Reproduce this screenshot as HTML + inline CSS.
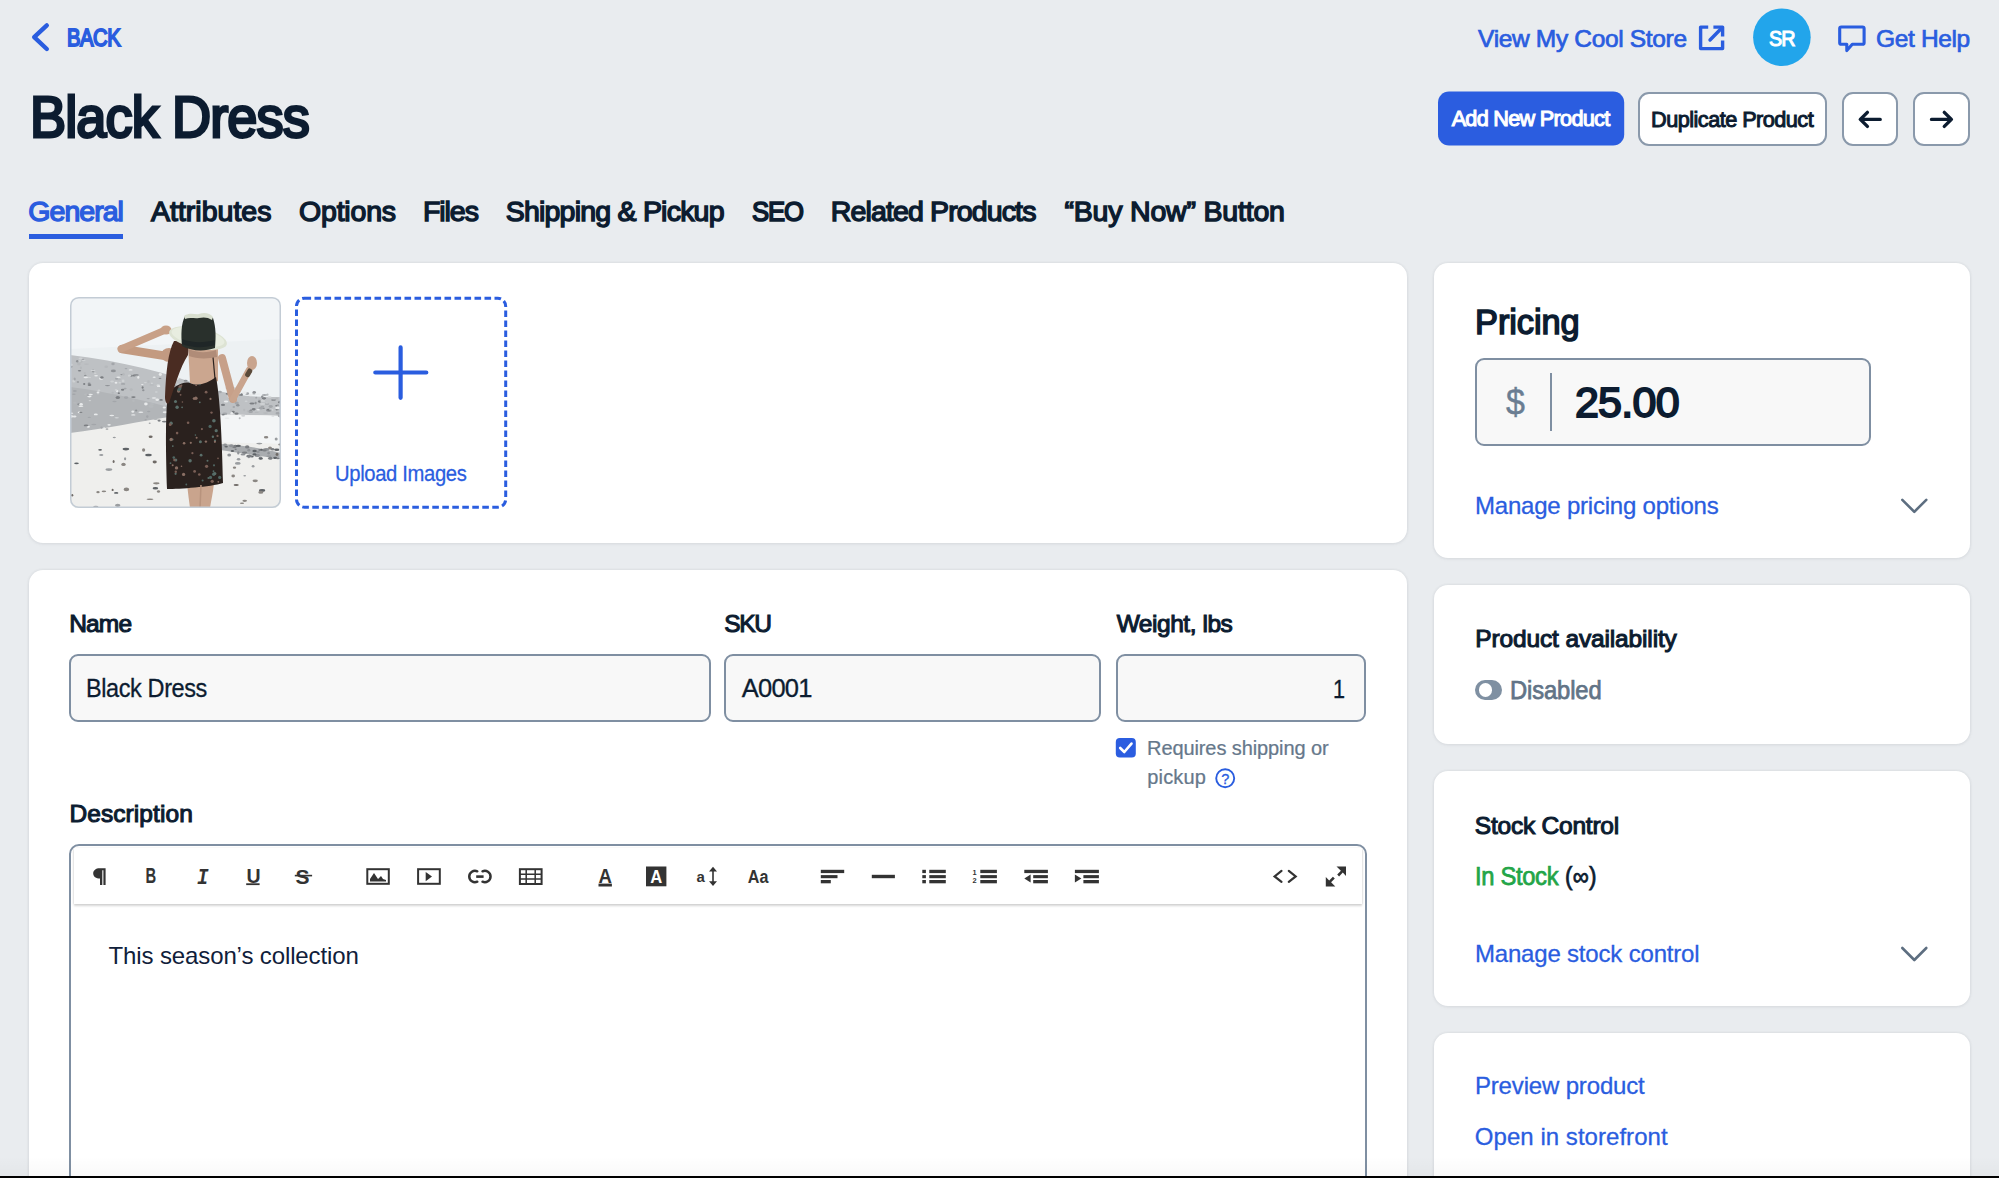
<!DOCTYPE html>
<html><head><meta charset="utf-8">
<style>
html,body{margin:0;padding:0;}
body{width:1999px;height:1178px;overflow:hidden;background:#e9ecef;position:relative;font-family:"Liberation Sans",sans-serif;}
.abs{position:absolute;}
.t{position:absolute;}
.card{position:absolute;background:#fff;border-radius:14px;box-shadow:0 0 3px rgba(30,40,60,0.09),0 1px 4px rgba(30,40,60,0.05);}
.inp{position:absolute;box-sizing:border-box;background:#f8f8f8;border:2px solid #7f8fa2;border-radius:9px;}
.btnw{position:absolute;box-sizing:border-box;background:#fff;border:2px solid #8a99ab;border-radius:11px;}
</style></head><body>
<!-- top bar icons -->
<svg class="abs" style="left:0;top:0" width="1999" height="160" viewBox="0 0 1999 160">
 <path d="M46.8,25.4 L34.2,37.2 L46.8,49" fill="none" stroke="#2a5ddf" stroke-width="4.4" stroke-linecap="round" stroke-linejoin="round"/>
 <path d="M1708.2,27.1 H1700.6 V48.6 H1722.6 V40.5" fill="none" stroke="#2a5ddf" stroke-width="3.4" stroke-linejoin="round"/>
 <path d="M1710,40 L1721.5,28.3" fill="none" stroke="#2a5ddf" stroke-width="3.4" stroke-linecap="round"/>
 <path d="M1713.4,27.1 H1722.6 V36.4" fill="none" stroke="#2a5ddf" stroke-width="3.4" stroke-linejoin="round"/>
 <circle cx="1781.9" cy="37.2" r="28.8" fill="#22a5eb"/>
 <path d="M1852.3,44.3 H1862.5 Q1864.1,44.3 1864.1,42.7 V28.6 Q1864.1,27 1862.5,27 H1841.3 Q1839.7,27 1839.7,28.6 V42.7 Q1839.7,44.3 1841.3,44.3 H1846.8 V50.6 Z" fill="none" stroke="#2a5ddf" stroke-width="3.1" stroke-linejoin="round"/>
 <rect x="1438" y="91.5" width="186.2" height="54" rx="11" fill="#2b5de0"/>
</svg>
<div class="btnw" style="left:1638.2px;top:92px;width:189.2px;height:53.6px;"></div>
<div class="btnw" style="left:1841.5px;top:92px;width:56.9px;height:53.6px;"></div>
<div class="btnw" style="left:1912.8px;top:92px;width:57.2px;height:53.6px;"></div>
<svg class="abs" style="left:1800px;top:100px" width="199" height="40" viewBox="1800 100 199 40">
 <path d="M1880.2,119.4 H1860.4 M1867.4,112.4 L1860.3,119.4 L1867.4,126.4" fill="none" stroke="#0c1c30" stroke-width="3.4" stroke-linecap="round" stroke-linejoin="round"/>
 <path d="M1931.5,119.4 H1951.3 M1944.3,112.4 L1951.4,119.4 L1944.3,126.4" fill="none" stroke="#0c1c30" stroke-width="3.4" stroke-linecap="round" stroke-linejoin="round"/>
</svg>
<div class="abs" style="left:28.6px;top:234.2px;width:94.6px;height:4.8px;background:#2a5ddf;"></div>

<!-- cards -->
<div class="card" style="left:28.7px;top:262.6px;width:1378.8px;height:280.6px;"></div>
<div class="card" style="left:28.7px;top:569.8px;width:1378.8px;height:700px;"></div>
<div class="card" style="left:1434.4px;top:262.6px;width:535.9px;height:295.4px;"></div>
<div class="card" style="left:1434.4px;top:585px;width:535.9px;height:159.2px;"></div>
<div class="card" style="left:1434.4px;top:770.9px;width:535.9px;height:234.7px;"></div>
<div class="card" style="left:1434.4px;top:1032.5px;width:535.9px;height:400px;"></div>

<svg class="abs" style="left:70px;top:297px" width="211" height="211" viewBox="0 0 211 211">
<defs>
 <clipPath id="pc"><rect x="0" y="0" width="211" height="211" rx="8"/></clipPath>
 <clipPath id="dc"><path d="M98,96 C104,90 112,84 120,86 C128,90 138,86 146,80 C150,100 152,140 153,186 C140,190 110,192 97,192 C96,160 95,120 98,96 Z"/></clipPath>
</defs>
<g clip-path="url(#pc)">
 <rect width="211" height="211" fill="#f2f5f7"/>
 <path d="M0,52 L211,42 L211,100 L0,100 Z" fill="#edf1f3"/>
 <path d="M0,58 C50,64 100,76 140,92 C170,100 190,100 211,100 L211,119 C180,118 140,117 106,119 C70,124 35,132 0,136 Z" fill="#bec1c4"/>
 <path d="M0,90 C40,95 80,105 106,112 L106,125 C70,128 35,134 0,137 Z" fill="#b2b5b8"/>
 <path d="M0,136 C35,132 70,124 106,119 C140,117 180,118 211,119 L211,211 L0,211 Z" fill="#efefed"/>
 <path d="M150,118 L211,119 L211,147 C190,146 170,146 150,145 Z" fill="#f3f5f6"/>
 <path d="M150,147 C175,148 195,152 211,156 L211,162 C195,160 170,156 150,153 Z" fill="#a9acaf"/>
 <ellipse cx="68.3" cy="80.4" rx="1.1" ry="1.3" fill="#e8eaeb"/><ellipse cx="19.9" cy="103.6" rx="1.3" ry="0.7" fill="#cfd2d4"/><ellipse cx="88.2" cy="88.3" rx="1.7" ry="1.3" fill="#cfd2d4"/><ellipse cx="26.1" cy="78.8" rx="1.9" ry="0.7" fill="#e8eaeb"/><ellipse cx="123.5" cy="84.7" rx="1.1" ry="1.4" fill="#a3a6aa"/><ellipse cx="61.1" cy="78.8" rx="1.9" ry="1.1" fill="#8f9296"/><ellipse cx="143.9" cy="90.5" rx="2.0" ry="0.9" fill="#cfd2d4"/><ellipse cx="115.6" cy="83.8" rx="2.0" ry="1.0" fill="#8f9296"/><ellipse cx="112.2" cy="116.2" rx="1.9" ry="1.0" fill="#b6b9bc"/><ellipse cx="63.3" cy="117.9" rx="2.2" ry="0.7" fill="#e8eaeb"/><ellipse cx="63.4" cy="100.1" rx="2.2" ry="0.9" fill="#7b7e82"/><ellipse cx="206.8" cy="101.5" rx="1.3" ry="0.9" fill="#b6b9bc"/><ellipse cx="196.9" cy="106.8" rx="1.1" ry="1.1" fill="#e8eaeb"/><ellipse cx="166.5" cy="116.7" rx="2.1" ry="1.1" fill="#7b7e82"/><ellipse cx="122.4" cy="102.1" rx="2.5" ry="1.0" fill="#8f9296"/><ellipse cx="140.1" cy="88.2" rx="1.5" ry="1.1" fill="#e8eaeb"/><ellipse cx="143.7" cy="103.3" rx="1.6" ry="1.2" fill="#e8eaeb"/><ellipse cx="4.8" cy="93.9" rx="2.0" ry="1.0" fill="#a3a6aa"/><ellipse cx="46.0" cy="85.7" rx="1.4" ry="1.0" fill="#e8eaeb"/><ellipse cx="183.9" cy="96.7" rx="1.6" ry="0.9" fill="#b6b9bc"/><ellipse cx="28.9" cy="93.5" rx="1.4" ry="1.0" fill="#cfd2d4"/><ellipse cx="75.7" cy="122.8" rx="1.2" ry="0.8" fill="#a3a6aa"/><ellipse cx="48.9" cy="82.6" rx="2.3" ry="0.8" fill="#b6b9bc"/><ellipse cx="59.5" cy="78.7" rx="1.6" ry="1.1" fill="#cfd2d4"/><ellipse cx="201.1" cy="113.0" rx="2.5" ry="1.2" fill="#cfd2d4"/><ellipse cx="156.1" cy="104.6" rx="2.3" ry="1.0" fill="#e8eaeb"/><ellipse cx="84.2" cy="80.3" rx="1.6" ry="0.8" fill="#e8eaeb"/><ellipse cx="207.8" cy="108.1" rx="1.5" ry="0.6" fill="#8f9296"/><ellipse cx="0.0" cy="69.7" rx="2.5" ry="1.2" fill="#8f9296"/><ellipse cx="14.8" cy="76.1" rx="1.2" ry="0.8" fill="#b6b9bc"/><ellipse cx="73.3" cy="93.3" rx="1.2" ry="1.0" fill="#8f9296"/><ellipse cx="206.3" cy="108.8" rx="1.1" ry="0.7" fill="#7b7e82"/><ellipse cx="72.3" cy="87.5" rx="1.3" ry="0.6" fill="#e8eaeb"/><ellipse cx="200.7" cy="109.5" rx="2.1" ry="1.4" fill="#a3a6aa"/><ellipse cx="160.0" cy="99.7" rx="2.4" ry="1.2" fill="#e8eaeb"/><ellipse cx="55.1" cy="91.6" rx="1.6" ry="0.8" fill="#a3a6aa"/><ellipse cx="114.3" cy="103.7" rx="1.4" ry="1.3" fill="#e8eaeb"/><ellipse cx="207.8" cy="116.3" rx="2.3" ry="1.3" fill="#a3a6aa"/><ellipse cx="47.8" cy="100.6" rx="2.2" ry="1.5" fill="#7b7e82"/><ellipse cx="166.7" cy="105.9" rx="2.1" ry="1.5" fill="#a3a6aa"/><ellipse cx="94.4" cy="124.6" rx="2.5" ry="0.9" fill="#7b7e82"/><ellipse cx="46.5" cy="81.8" rx="1.5" ry="1.0" fill="#a3a6aa"/><ellipse cx="207.9" cy="111.5" rx="1.8" ry="1.2" fill="#8f9296"/><ellipse cx="168.7" cy="94.2" rx="1.2" ry="0.9" fill="#e8eaeb"/><ellipse cx="150.1" cy="95.0" rx="1.7" ry="1.2" fill="#a3a6aa"/><ellipse cx="18.3" cy="129.7" rx="1.6" ry="1.0" fill="#e8eaeb"/><ellipse cx="199.8" cy="113.8" rx="2.6" ry="0.6" fill="#a3a6aa"/><ellipse cx="124.7" cy="102.7" rx="1.2" ry="1.3" fill="#e8eaeb"/><ellipse cx="206.8" cy="112.4" rx="1.2" ry="1.1" fill="#7b7e82"/><ellipse cx="4.5" cy="119.5" rx="2.0" ry="1.1" fill="#e8eaeb"/><ellipse cx="197.0" cy="107.1" rx="2.3" ry="0.8" fill="#a3a6aa"/><ellipse cx="53.1" cy="86.9" rx="2.2" ry="0.9" fill="#a3a6aa"/><ellipse cx="114.9" cy="118.8" rx="2.5" ry="0.9" fill="#8f9296"/><ellipse cx="96.7" cy="106.7" rx="1.7" ry="1.4" fill="#cfd2d4"/><ellipse cx="105.8" cy="104.5" rx="1.8" ry="1.4" fill="#cfd2d4"/><ellipse cx="163.8" cy="110.1" rx="1.3" ry="1.0" fill="#a3a6aa"/><ellipse cx="153.0" cy="107.9" rx="2.1" ry="1.1" fill="#7b7e82"/><ellipse cx="101.8" cy="116.3" rx="1.1" ry="0.8" fill="#cfd2d4"/><ellipse cx="8.9" cy="67.1" rx="1.9" ry="1.3" fill="#b6b9bc"/><ellipse cx="192.5" cy="107.0" rx="2.6" ry="1.1" fill="#cfd2d4"/><ellipse cx="42.1" cy="84.5" rx="1.9" ry="1.0" fill="#cfd2d4"/><ellipse cx="198.7" cy="113.2" rx="2.5" ry="1.4" fill="#7b7e82"/><ellipse cx="42.7" cy="95.7" rx="1.2" ry="1.0" fill="#b6b9bc"/><ellipse cx="15.3" cy="78.6" rx="1.3" ry="0.9" fill="#8f9296"/><ellipse cx="25.8" cy="117.4" rx="2.0" ry="0.9" fill="#e8eaeb"/><ellipse cx="53.4" cy="77.2" rx="1.4" ry="1.5" fill="#b6b9bc"/><ellipse cx="84.0" cy="101.0" rx="2.3" ry="0.7" fill="#e8eaeb"/><ellipse cx="91.1" cy="102.9" rx="1.7" ry="0.9" fill="#7b7e82"/><ellipse cx="19.5" cy="88.1" rx="1.9" ry="1.0" fill="#7b7e82"/><ellipse cx="3.8" cy="83.9" rx="1.5" ry="1.5" fill="#cfd2d4"/><ellipse cx="23.8" cy="127.5" rx="2.6" ry="0.7" fill="#a3a6aa"/><ellipse cx="56.0" cy="71.6" rx="1.4" ry="0.7" fill="#a3a6aa"/><ellipse cx="89.1" cy="123.6" rx="1.6" ry="1.1" fill="#7b7e82"/><ellipse cx="108.6" cy="102.9" rx="1.1" ry="0.7" fill="#7b7e82"/><ellipse cx="145.2" cy="102.7" rx="1.4" ry="0.6" fill="#8f9296"/><ellipse cx="18.7" cy="80.4" rx="2.4" ry="0.7" fill="#cfd2d4"/><ellipse cx="182.0" cy="106.5" rx="2.6" ry="1.0" fill="#7b7e82"/><ellipse cx="193.2" cy="111.3" rx="1.8" ry="0.8" fill="#8f9296"/><ellipse cx="23.1" cy="74.0" rx="1.3" ry="1.4" fill="#8f9296"/><ellipse cx="132.6" cy="105.9" rx="1.5" ry="1.1" fill="#a3a6aa"/><ellipse cx="37.5" cy="88.6" rx="2.6" ry="0.6" fill="#8f9296"/><ellipse cx="3.9" cy="97.2" rx="1.8" ry="0.8" fill="#a3a6aa"/><ellipse cx="94.3" cy="110.4" rx="1.7" ry="1.0" fill="#e8eaeb"/><ellipse cx="176.1" cy="104.3" rx="1.5" ry="0.8" fill="#cfd2d4"/><ellipse cx="48.4" cy="80.3" rx="2.2" ry="0.7" fill="#e8eaeb"/><ellipse cx="208.8" cy="118.8" rx="1.0" ry="1.2" fill="#a3a6aa"/><ellipse cx="185.6" cy="106.1" rx="1.1" ry="1.4" fill="#8f9296"/><ellipse cx="183.7" cy="112.3" rx="2.0" ry="1.2" fill="#7b7e82"/><ellipse cx="9.5" cy="73.7" rx="1.7" ry="0.8" fill="#7b7e82"/><ellipse cx="202.9" cy="119.0" rx="1.5" ry="0.6" fill="#cfd2d4"/><ellipse cx="186.2" cy="100.7" rx="1.0" ry="0.9" fill="#a3a6aa"/><ellipse cx="100.1" cy="102.8" rx="1.4" ry="1.3" fill="#a3a6aa"/><ellipse cx="19.2" cy="120.4" rx="1.6" ry="0.6" fill="#a3a6aa"/><ellipse cx="4.7" cy="82.0" rx="1.1" ry="1.5" fill="#a3a6aa"/><ellipse cx="180.0" cy="98.1" rx="2.3" ry="1.1" fill="#e8eaeb"/><ellipse cx="161.3" cy="113.6" rx="1.2" ry="1.3" fill="#b6b9bc"/><ellipse cx="135.7" cy="86.8" rx="2.4" ry="1.2" fill="#e8eaeb"/><ellipse cx="154.8" cy="116.8" rx="2.5" ry="1.3" fill="#a3a6aa"/><ellipse cx="119.9" cy="117.7" rx="2.3" ry="1.1" fill="#8f9296"/><ellipse cx="188.4" cy="112.7" rx="2.0" ry="0.7" fill="#e8eaeb"/><ellipse cx="8.8" cy="107.3" rx="1.6" ry="1.0" fill="#8f9296"/><ellipse cx="10.7" cy="61.5" rx="2.1" ry="1.0" fill="#cfd2d4"/><ellipse cx="0.7" cy="119.4" rx="2.5" ry="1.4" fill="#e8eaeb"/><ellipse cx="19.4" cy="99.6" rx="2.2" ry="0.8" fill="#e8eaeb"/><ellipse cx="15.7" cy="80.4" rx="2.2" ry="0.8" fill="#e8eaeb"/><ellipse cx="137.1" cy="103.4" rx="1.1" ry="1.4" fill="#b6b9bc"/><ellipse cx="60.6" cy="72.9" rx="2.0" ry="0.7" fill="#e8eaeb"/><ellipse cx="31.1" cy="81.6" rx="2.1" ry="1.2" fill="#e8eaeb"/><ellipse cx="28.2" cy="97.0" rx="1.4" ry="1.2" fill="#b6b9bc"/><ellipse cx="146.1" cy="112.0" rx="2.1" ry="0.9" fill="#7b7e82"/><ellipse cx="98.3" cy="115.9" rx="1.3" ry="1.5" fill="#cfd2d4"/><ellipse cx="197.5" cy="97.7" rx="1.1" ry="1.1" fill="#b6b9bc"/><ellipse cx="209.9" cy="119.0" rx="1.3" ry="1.5" fill="#b6b9bc"/><ellipse cx="44.5" cy="104.5" rx="2.2" ry="0.8" fill="#a3a6aa"/><ellipse cx="75.9" cy="107.0" rx="1.8" ry="1.4" fill="#e8eaeb"/><ellipse cx="148.4" cy="95.9" rx="1.6" ry="0.7" fill="#b6b9bc"/><ellipse cx="200.4" cy="112.8" rx="1.5" ry="0.7" fill="#b6b9bc"/><ellipse cx="72.6" cy="90.5" rx="1.0" ry="1.3" fill="#7b7e82"/><ellipse cx="177.1" cy="96.6" rx="2.1" ry="1.4" fill="#a3a6aa"/><ellipse cx="61.2" cy="92.6" rx="1.6" ry="1.4" fill="#b6b9bc"/><ellipse cx="16.1" cy="128.4" rx="2.4" ry="0.9" fill="#7b7e82"/><ellipse cx="10.9" cy="109.2" rx="2.5" ry="0.8" fill="#e8eaeb"/><ellipse cx="56.1" cy="100.6" rx="2.2" ry="1.3" fill="#a3a6aa"/><ellipse cx="90.3" cy="77.5" rx="1.6" ry="1.4" fill="#e8eaeb"/><ellipse cx="116.9" cy="90.4" rx="1.1" ry="1.3" fill="#8f9296"/><ellipse cx="95.1" cy="115.2" rx="2.4" ry="1.0" fill="#e8eaeb"/><ellipse cx="192.4" cy="109.6" rx="1.8" ry="0.9" fill="#a3a6aa"/><ellipse cx="62.8" cy="114.6" rx="1.4" ry="1.2" fill="#e8eaeb"/><ellipse cx="63.5" cy="103.8" rx="1.2" ry="1.2" fill="#b6b9bc"/><ellipse cx="15.9" cy="97.5" rx="1.9" ry="1.0" fill="#b6b9bc"/><ellipse cx="70.2" cy="115.8" rx="1.2" ry="0.8" fill="#b6b9bc"/><ellipse cx="19.1" cy="86.3" rx="1.5" ry="0.9" fill="#8f9296"/><ellipse cx="170.8" cy="98.1" rx="2.2" ry="1.0" fill="#8f9296"/><ellipse cx="87.3" cy="103.2" rx="1.4" ry="1.3" fill="#b6b9bc"/><ellipse cx="105.1" cy="106.5" rx="1.2" ry="1.1" fill="#7b7e82"/><ellipse cx="132.9" cy="119.4" rx="1.1" ry="1.4" fill="#a3a6aa"/><ellipse cx="81.1" cy="109.5" rx="2.5" ry="1.4" fill="#b6b9bc"/><ellipse cx="184.2" cy="95.2" rx="1.7" ry="1.3" fill="#8f9296"/><ellipse cx="169.7" cy="121.2" rx="1.0" ry="1.0" fill="#b6b9bc"/><ellipse cx="195.6" cy="116.1" rx="2.6" ry="0.8" fill="#b6b9bc"/><ellipse cx="23.0" cy="73.5" rx="2.6" ry="0.7" fill="#cfd2d4"/><ellipse cx="174.2" cy="113.1" rx="1.1" ry="1.3" fill="#b6b9bc"/><ellipse cx="0.3" cy="67.7" rx="2.5" ry="1.2" fill="#cfd2d4"/><ellipse cx="64.1" cy="78.4" rx="1.8" ry="1.0" fill="#7b7e82"/><ellipse cx="161.2" cy="93.3" rx="1.8" ry="1.1" fill="#7b7e82"/><ellipse cx="81.9" cy="86.5" rx="1.0" ry="1.1" fill="#cfd2d4"/><ellipse cx="210.2" cy="105.2" rx="2.0" ry="1.4" fill="#7b7e82"/><ellipse cx="100.3" cy="89.6" rx="1.0" ry="1.0" fill="#a3a6aa"/><ellipse cx="137.1" cy="87.5" rx="1.8" ry="1.2" fill="#a3a6aa"/><ellipse cx="88.6" cy="89.2" rx="1.7" ry="0.9" fill="#e8eaeb"/><ellipse cx="104.0" cy="112.4" rx="1.7" ry="1.2" fill="#e8eaeb"/><ellipse cx="41.8" cy="118.5" rx="2.4" ry="0.7" fill="#e8eaeb"/><ellipse cx="104.6" cy="88.5" rx="1.4" ry="0.8" fill="#a3a6aa"/><ellipse cx="160.5" cy="99.6" rx="1.8" ry="0.8" fill="#cfd2d4"/><ellipse cx="47.1" cy="94.1" rx="1.1" ry="1.1" fill="#e8eaeb"/><ellipse cx="194.5" cy="98.0" rx="2.6" ry="0.7" fill="#8f9296"/><ellipse cx="10.9" cy="64.6" rx="1.7" ry="1.2" fill="#b6b9bc"/><ellipse cx="66.3" cy="77.9" rx="2.5" ry="0.9" fill="#8f9296"/><ellipse cx="39.1" cy="127.8" rx="1.7" ry="0.9" fill="#e8eaeb"/><ellipse cx="153.1" cy="117.8" rx="1.7" ry="0.7" fill="#7b7e82"/><ellipse cx="16.5" cy="67.1" rx="2.5" ry="0.7" fill="#b6b9bc"/><ellipse cx="203.5" cy="102.9" rx="2.2" ry="0.9" fill="#7b7e82"/><ellipse cx="169.6" cy="94.4" rx="1.8" ry="0.9" fill="#e8eaeb"/><ellipse cx="194.0" cy="101.2" rx="2.2" ry="1.0" fill="#7b7e82"/><ellipse cx="133.3" cy="94.5" rx="2.2" ry="0.6" fill="#e8eaeb"/><ellipse cx="7.4" cy="64.2" rx="1.4" ry="1.3" fill="#8f9296"/><ellipse cx="189.6" cy="104.2" rx="1.5" ry="1.5" fill="#7b7e82"/><ellipse cx="9.2" cy="115.4" rx="1.5" ry="0.8" fill="#e8eaeb"/><ellipse cx="0.8" cy="116.2" rx="2.5" ry="0.7" fill="#e8eaeb"/><ellipse cx="174.3" cy="95.8" rx="2.5" ry="1.5" fill="#e8eaeb"/><ellipse cx="81.6" cy="87.9" rx="2.3" ry="0.7" fill="#b6b9bc"/><ellipse cx="104.8" cy="79.3" rx="1.5" ry="1.2" fill="#e8eaeb"/><ellipse cx="31.9" cy="80.5" rx="1.7" ry="1.3" fill="#7b7e82"/><ellipse cx="125.7" cy="104.7" rx="2.2" ry="0.8" fill="#b6b9bc"/><ellipse cx="13.7" cy="63.2" rx="1.9" ry="0.7" fill="#cfd2d4"/><ellipse cx="90.0" cy="81.4" rx="1.4" ry="0.7" fill="#8f9296"/><ellipse cx="20.3" cy="97.6" rx="2.6" ry="0.8" fill="#e8eaeb"/><ellipse cx="28.0" cy="95.5" rx="1.4" ry="1.1" fill="#e8eaeb"/><ellipse cx="163.3" cy="114.9" rx="1.5" ry="1.1" fill="#7b7e82"/><ellipse cx="78.7" cy="114.5" rx="1.7" ry="0.8" fill="#a3a6aa"/><ellipse cx="49.7" cy="85.7" rx="1.3" ry="0.7" fill="#cfd2d4"/><ellipse cx="53.1" cy="83.9" rx="1.4" ry="1.3" fill="#cfd2d4"/><ellipse cx="137.9" cy="124.2" rx="1.0" ry="1.4" fill="#8f9296"/><ellipse cx="48.8" cy="96.2" rx="1.1" ry="0.9" fill="#7b7e82"/><ellipse cx="25.2" cy="76.3" rx="1.3" ry="0.7" fill="#cfd2d4"/><ellipse cx="108.2" cy="87.9" rx="1.4" ry="1.3" fill="#cfd2d4"/><ellipse cx="199.5" cy="100.1" rx="2.1" ry="0.9" fill="#cfd2d4"/><ellipse cx="7.9" cy="85.0" rx="1.3" ry="0.8" fill="#8f9296"/><ellipse cx="126.5" cy="110.7" rx="2.3" ry="1.3" fill="#a3a6aa"/><ellipse cx="86.3" cy="95.0" rx="1.5" ry="0.8" fill="#cfd2d4"/><ellipse cx="167.8" cy="108.3" rx="1.7" ry="1.3" fill="#8f9296"/><ellipse cx="140.1" cy="91.8" rx="1.1" ry="0.7" fill="#cfd2d4"/><ellipse cx="146.7" cy="102.2" rx="2.1" ry="1.0" fill="#7b7e82"/><ellipse cx="10.8" cy="115.3" rx="1.7" ry="0.6" fill="#7b7e82"/><ellipse cx="161.8" cy="116.3" rx="1.3" ry="1.3" fill="#e8eaeb"/><ellipse cx="43.0" cy="66.9" rx="1.7" ry="1.3" fill="#a3a6aa"/><ellipse cx="85.7" cy="122.2" rx="2.2" ry="0.7" fill="#b6b9bc"/><ellipse cx="10.9" cy="70.7" rx="1.1" ry="1.2" fill="#b6b9bc"/><ellipse cx="78.2" cy="101.6" rx="1.6" ry="0.7" fill="#a3a6aa"/><ellipse cx="36.2" cy="69.7" rx="1.8" ry="1.3" fill="#b6b9bc"/><ellipse cx="204.0" cy="102.7" rx="2.3" ry="0.6" fill="#a3a6aa"/><ellipse cx="192.6" cy="103.9" rx="2.5" ry="0.9" fill="#cfd2d4"/><ellipse cx="190.8" cy="111.2" rx="2.0" ry="1.4" fill="#a3a6aa"/><ellipse cx="131.0" cy="109.3" rx="2.3" ry="0.8" fill="#a3a6aa"/><ellipse cx="46.0" cy="92.9" rx="1.3" ry="0.9" fill="#cfd2d4"/><ellipse cx="31.5" cy="130.6" rx="1.1" ry="1.1" fill="#a3a6aa"/><ellipse cx="159.8" cy="91.1" rx="1.2" ry="1.1" fill="#7b7e82"/><ellipse cx="116.1" cy="109.4" rx="2.0" ry="0.9" fill="#7b7e82"/><ellipse cx="52.6" cy="92.8" rx="1.7" ry="1.0" fill="#7b7e82"/><ellipse cx="4.9" cy="105.8" rx="1.7" ry="1.0" fill="#b6b9bc"/><ellipse cx="130.5" cy="117.7" rx="2.3" ry="1.0" fill="#a3a6aa"/><ellipse cx="14.2" cy="87.0" rx="1.1" ry="1.0" fill="#7b7e82"/><ellipse cx="107.6" cy="81.4" rx="1.2" ry="1.4" fill="#e8eaeb"/><ellipse cx="66.2" cy="113.5" rx="1.1" ry="1.1" fill="#8f9296"/><ellipse cx="79.7" cy="126.2" rx="1.0" ry="0.7" fill="#a3a6aa"/><ellipse cx="129.6" cy="112.5" rx="1.3" ry="1.5" fill="#8f9296"/><ellipse cx="103.8" cy="125.0" rx="2.1" ry="1.2" fill="#a3a6aa"/><ellipse cx="46.7" cy="120.7" rx="2.2" ry="0.7" fill="#cfd2d4"/><ellipse cx="189.2" cy="102.5" rx="1.2" ry="1.1" fill="#b6b9bc"/><ellipse cx="194.1" cy="101.6" rx="2.0" ry="0.8" fill="#7b7e82"/><ellipse cx="78.5" cy="84.7" rx="1.3" ry="1.4" fill="#b6b9bc"/><ellipse cx="143.4" cy="120.2" rx="2.3" ry="0.8" fill="#a3a6aa"/><ellipse cx="162.1" cy="91.8" rx="2.5" ry="1.0" fill="#7b7e82"/><ellipse cx="110.0" cy="112.1" rx="1.4" ry="1.1" fill="#8f9296"/><ellipse cx="180.7" cy="114.1" rx="1.4" ry="1.5" fill="#7b7e82"/><ellipse cx="121.8" cy="97.9" rx="1.7" ry="0.8" fill="#8f9296"/><ellipse cx="156.9" cy="90.9" rx="1.4" ry="1.2" fill="#cfd2d4"/><ellipse cx="207.6" cy="111.0" rx="2.4" ry="1.3" fill="#e8eaeb"/><ellipse cx="157.6" cy="96.8" rx="2.0" ry="1.0" fill="#7b7e82"/><ellipse cx="108.2" cy="121.9" rx="1.8" ry="1.2" fill="#a3a6aa"/><ellipse cx="9.6" cy="64.0" rx="1.6" ry="0.7" fill="#cfd2d4"/><ellipse cx="75.4" cy="85.6" rx="1.5" ry="0.7" fill="#cfd2d4"/><ellipse cx="77.3" cy="119.6" rx="1.2" ry="1.4" fill="#a3a6aa"/><ellipse cx="51.4" cy="77.6" rx="1.1" ry="0.7" fill="#8f9296"/><ellipse cx="140.4" cy="96.3" rx="2.5" ry="0.7" fill="#7b7e82"/><ellipse cx="173.2" cy="118.7" rx="2.0" ry="1.0" fill="#cfd2d4"/><ellipse cx="197.7" cy="114.0" rx="1.3" ry="0.6" fill="#a3a6aa"/><ellipse cx="13.0" cy="62.4" rx="1.4" ry="0.7" fill="#a3a6aa"/><ellipse cx="164.3" cy="91.1" rx="2.1" ry="0.8" fill="#cfd2d4"/><ellipse cx="87.2" cy="102.8" rx="1.8" ry="1.2" fill="#e8eaeb"/><ellipse cx="171.6" cy="97.4" rx="1.1" ry="1.2" fill="#7b7e82"/><ellipse cx="209.7" cy="113.8" rx="2.1" ry="0.6" fill="#b6b9bc"/><ellipse cx="178.2" cy="114.3" rx="1.1" ry="1.2" fill="#b6b9bc"/><ellipse cx="37.0" cy="132.0" rx="1.4" ry="0.6" fill="#7b7e82"/><ellipse cx="70.8" cy="115.2" rx="2.5" ry="0.8" fill="#e8eaeb"/><ellipse cx="11.1" cy="107.2" rx="1.7" ry="1.3" fill="#e8eaeb"/><ellipse cx="110.4" cy="92.4" rx="2.5" ry="1.4" fill="#e8eaeb"/><ellipse cx="18.0" cy="98.1" rx="1.4" ry="0.8" fill="#a3a6aa"/><ellipse cx="157.0" cy="121.2" rx="2.5" ry="0.8" fill="#e8eaeb"/><ellipse cx="82.0" cy="107.1" rx="2.5" ry="1.2" fill="#b6b9bc"/><ellipse cx="146.2" cy="111.6" rx="1.8" ry="1.4" fill="#cfd2d4"/><ellipse cx="147.2" cy="118.6" rx="2.5" ry="0.8" fill="#b6b9bc"/><ellipse cx="186.7" cy="115.4" rx="2.0" ry="0.7" fill="#b6b9bc"/><ellipse cx="192.2" cy="99.7" rx="1.2" ry="1.2" fill="#8f9296"/><ellipse cx="34.1" cy="130.9" rx="1.0" ry="0.6" fill="#e8eaeb"/><ellipse cx="146.1" cy="110.4" rx="1.1" ry="0.6" fill="#e8eaeb"/><ellipse cx="180.7" cy="114.8" rx="2.3" ry="1.3" fill="#a3a6aa"/><ellipse cx="188.1" cy="97.1" rx="2.5" ry="0.7" fill="#e8eaeb"/><ellipse cx="43.4" cy="73.9" rx="2.5" ry="1.4" fill="#8f9296"/><ellipse cx="159.0" cy="92.6" rx="2.0" ry="1.0" fill="#e8eaeb"/><ellipse cx="28.0" cy="195.2" rx="1.7" ry="1.1" fill="#8a8682"/><ellipse cx="55.1" cy="161.7" rx="1.1" ry="1.5" fill="#9a9da0"/><ellipse cx="192.1" cy="193.5" rx="3.1" ry="1.4" fill="#5e6266"/><ellipse cx="6.5" cy="166.4" rx="2.3" ry="0.8" fill="#5e6266"/><ellipse cx="174.7" cy="178.7" rx="1.4" ry="0.7" fill="#9a9da0"/><ellipse cx="42.6" cy="192.9" rx="1.0" ry="1.2" fill="#6f6a66"/><ellipse cx="38.9" cy="172.6" rx="3.4" ry="1.3" fill="#9a9da0"/><ellipse cx="172.0" cy="206.3" rx="2.2" ry="0.8" fill="#8a8682"/><ellipse cx="166.2" cy="188.0" rx="2.6" ry="1.1" fill="#6f6a66"/><ellipse cx="84.7" cy="165.0" rx="2.1" ry="1.4" fill="#6f6a66"/><ellipse cx="78.5" cy="158.0" rx="3.3" ry="1.3" fill="#5e6266"/><ellipse cx="80.0" cy="202.2" rx="3.4" ry="0.8" fill="#8a8682"/><ellipse cx="183.1" cy="169.2" rx="1.4" ry="1.2" fill="#9a9da0"/><ellipse cx="163.2" cy="179.0" rx="1.8" ry="1.4" fill="#8a8682"/><ellipse cx="56.4" cy="192.4" rx="2.8" ry="1.8" fill="#8a8682"/><ellipse cx="73.6" cy="153.0" rx="1.6" ry="1.8" fill="#8a8682"/><ellipse cx="209.9" cy="147.5" rx="1.5" ry="0.9" fill="#6f6a66"/><ellipse cx="31.3" cy="158.0" rx="2.1" ry="0.9" fill="#9a9da0"/><ellipse cx="43.6" cy="164.5" rx="1.0" ry="1.6" fill="#6f6a66"/><ellipse cx="207.0" cy="157.5" rx="1.4" ry="1.4" fill="#6f6a66"/><ellipse cx="85.4" cy="191.3" rx="2.8" ry="1.3" fill="#5e6266"/><ellipse cx="185.2" cy="183.8" rx="2.7" ry="1.4" fill="#8a8682"/><ellipse cx="88.5" cy="194.5" rx="1.6" ry="1.2" fill="#8a8682"/><ellipse cx="86.4" cy="186.3" rx="3.2" ry="1.1" fill="#8a8682"/><ellipse cx="2.2" cy="198.2" rx="1.1" ry="1.3" fill="#6f6a66"/><ellipse cx="33.9" cy="194.4" rx="2.3" ry="0.8" fill="#8a8682"/><ellipse cx="200.0" cy="151.0" rx="2.0" ry="1.5" fill="#8a8682"/><ellipse cx="25.8" cy="209.8" rx="2.6" ry="1.0" fill="#9a9da0"/><ellipse cx="80.6" cy="139.7" rx="2.0" ry="1.2" fill="#6f6a66"/><ellipse cx="55.9" cy="152.1" rx="3.3" ry="1.3" fill="#5e6266"/><ellipse cx="46.2" cy="195.9" rx="2.2" ry="0.9" fill="#5e6266"/><ellipse cx="196.1" cy="140.2" rx="2.2" ry="1.3" fill="#8a8682"/><ellipse cx="47.7" cy="208.3" rx="2.7" ry="1.6" fill="#9a9da0"/><ellipse cx="167.8" cy="166.4" rx="2.9" ry="1.4" fill="#9a9da0"/><ellipse cx="164.5" cy="170.7" rx="1.7" ry="1.1" fill="#8a8682"/><ellipse cx="53.5" cy="167.4" rx="2.2" ry="1.6" fill="#8a8682"/><ellipse cx="168.6" cy="162.2" rx="1.8" ry="1.2" fill="#9a9da0"/><ellipse cx="189.3" cy="146.6" rx="3.1" ry="0.8" fill="#9a9da0"/><ellipse cx="174.7" cy="203.8" rx="2.3" ry="1.1" fill="#8a8682"/><ellipse cx="44.3" cy="140.5" rx="1.6" ry="0.8" fill="#9a9da0"/><ellipse cx="30.1" cy="152.8" rx="1.9" ry="0.9" fill="#5e6266"/><ellipse cx="190.8" cy="195.2" rx="2.5" ry="1.5" fill="#8a8682"/><ellipse cx="206.2" cy="141.9" rx="1.5" ry="1.5" fill="#9a9da0"/><ellipse cx="164.3" cy="150.1" rx="2.1" ry="1.1" fill="#7b7e82"/><ellipse cx="205.2" cy="160.9" rx="2.0" ry="1.2" fill="#5e6266"/><ellipse cx="202.6" cy="152.3" rx="1.9" ry="1.2" fill="#7b7e82"/><ellipse cx="190.6" cy="161.1" rx="1.9" ry="1.6" fill="#7b7e82"/><ellipse cx="191.2" cy="153.3" rx="2.3" ry="0.7" fill="#7b7e82"/><ellipse cx="187.2" cy="158.9" rx="2.6" ry="0.8" fill="#7b7e82"/><ellipse cx="179.5" cy="159.0" rx="1.1" ry="1.3" fill="#5e6266"/><ellipse cx="188.1" cy="154.9" rx="1.7" ry="1.1" fill="#8f9296"/><ellipse cx="182.1" cy="159.5" rx="1.6" ry="1.0" fill="#5e6266"/><ellipse cx="165.3" cy="149.2" rx="1.6" ry="1.4" fill="#7b7e82"/><ellipse cx="174.6" cy="155.5" rx="2.7" ry="1.0" fill="#7b7e82"/><ellipse cx="162.4" cy="154.1" rx="1.7" ry="1.0" fill="#5e6266"/><ellipse cx="168.3" cy="155.9" rx="1.2" ry="1.6" fill="#8f9296"/><ellipse cx="174.3" cy="156.1" rx="2.1" ry="0.7" fill="#7b7e82"/><ellipse cx="168.3" cy="148.9" rx="2.6" ry="1.1" fill="#5e6266"/><ellipse cx="196.7" cy="152.4" rx="2.8" ry="1.3" fill="#8f9296"/><ellipse cx="187.6" cy="158.3" rx="2.4" ry="1.5" fill="#8f9296"/><ellipse cx="155.1" cy="148.0" rx="1.9" ry="1.4" fill="#8f9296"/><ellipse cx="156.2" cy="149.8" rx="1.8" ry="0.8" fill="#5e6266"/><ellipse cx="206.8" cy="152.8" rx="2.6" ry="1.2" fill="#5e6266"/><ellipse cx="165.7" cy="152.2" rx="1.1" ry="0.7" fill="#7b7e82"/><ellipse cx="184.5" cy="157.4" rx="2.0" ry="1.2" fill="#5e6266"/><ellipse cx="200.3" cy="161.3" rx="2.2" ry="1.5" fill="#7b7e82"/><ellipse cx="177.2" cy="149.9" rx="2.2" ry="1.6" fill="#7b7e82"/><ellipse cx="190.2" cy="152.9" rx="2.1" ry="0.8" fill="#7b7e82"/><ellipse cx="178.8" cy="160.6" rx="1.0" ry="0.7" fill="#8f9296"/><ellipse cx="191.7" cy="152.6" rx="1.4" ry="0.8" fill="#5e6266"/><ellipse cx="178.8" cy="153.2" rx="1.5" ry="1.4" fill="#8f9296"/><ellipse cx="161.4" cy="148.7" rx="2.4" ry="1.5" fill="#8f9296"/><ellipse cx="194.5" cy="152.5" rx="2.1" ry="1.1" fill="#8f9296"/><ellipse cx="190.8" cy="161.8" rx="2.4" ry="0.7" fill="#5e6266"/><ellipse cx="150.9" cy="154.9" rx="1.2" ry="1.0" fill="#8f9296"/><ellipse cx="194.5" cy="153.4" rx="2.2" ry="1.0" fill="#7b7e82"/><ellipse cx="207.9" cy="161.5" rx="2.4" ry="0.8" fill="#7b7e82"/><ellipse cx="198.6" cy="156.2" rx="1.3" ry="1.4" fill="#8f9296"/><ellipse cx="179.1" cy="159.2" rx="2.9" ry="1.4" fill="#7b7e82"/><ellipse cx="184.6" cy="154.0" rx="2.2" ry="1.3" fill="#5e6266"/><ellipse cx="198.9" cy="159.1" rx="2.5" ry="0.7" fill="#8f9296"/><ellipse cx="159.2" cy="157.9" rx="1.9" ry="1.5" fill="#8f9296"/><ellipse cx="173.0" cy="157.5" rx="2.5" ry="0.9" fill="#8f9296"/>
 <!-- raised arm -->
 <path d="M96,59 L52,52" stroke="#c39a80" stroke-width="8.5" stroke-linecap="round"/>
 <path d="M51,52 L93,34" stroke="#c8a087" stroke-width="7" stroke-linecap="round"/>
 <ellipse cx="96" cy="33" rx="5.5" ry="4.5" fill="#c8a087"/>
 <ellipse cx="99" cy="58" rx="8" ry="7" fill="#c29a82"/>
 <!-- right arm -->
 <path d="M152,61 L163,102" stroke="#c7a089" stroke-width="8" stroke-linecap="round"/>
 <path d="M163,102 L179,73" stroke="#c9a48d" stroke-width="6.5" stroke-linecap="round"/>
 <ellipse cx="182" cy="66" rx="5" ry="7" fill="#c9a48d"/>
 <rect x="174" y="74" width="9" height="5" rx="2" fill="#5a4a3a" transform="rotate(-60 178 76)"/>
 <!-- legs -->
 <path d="M117,186 L144,186 C143,196 141,204 140,211 L120,211 C119,204 118,196 117,186 Z" fill="#c9a48d"/>
 <!-- chest -->
 <path d="M118,48 L148,52 L148,84 C138,88 128,90 120,86 Z" fill="#cba68f"/>
 <!-- dress -->
 <path d="M98,96 C104,90 112,84 120,86 C128,90 138,86 146,80 C150,100 152,140 153,186 C140,190 110,192 97,192 C96,160 95,120 98,96 Z" fill="#2a211e"/>
 <g clip-path="url(#dc)"><circle cx="122.4" cy="156.2" r="1.1" fill="#7a5f56"/><circle cx="120.8" cy="145.8" r="1.1" fill="#8a6f64"/><circle cx="105.6" cy="176.8" r="1.1" fill="#5a6f6a"/><circle cx="144.0" cy="168.3" r="1.1" fill="#4f6662"/><circle cx="102.6" cy="142.5" r="1.0" fill="#4f6662"/><circle cx="138.5" cy="181.0" r="1.1" fill="#5a6f6a"/><circle cx="101.1" cy="126.3" r="1.7" fill="#5a6f6a"/><circle cx="129.7" cy="87.0" r="1.3" fill="#4f6662"/><circle cx="102.7" cy="168.3" r="1.0" fill="#8a6f64"/><circle cx="129.3" cy="177.5" r="1.3" fill="#7a5f56"/><circle cx="129.8" cy="105.3" r="0.9" fill="#5a6f6a"/><circle cx="141.5" cy="115.6" r="1.2" fill="#7a5f56"/><circle cx="125.9" cy="101.2" r="1.7" fill="#8a6f64"/><circle cx="124.6" cy="174.4" r="1.4" fill="#7a5f56"/><circle cx="140.5" cy="101.9" r="1.1" fill="#8a6f64"/><circle cx="126.1" cy="88.1" r="1.0" fill="#8a6f64"/><circle cx="145.0" cy="143.7" r="1.1" fill="#5a6f6a"/><circle cx="140.1" cy="129.4" r="1.6" fill="#4f6662"/><circle cx="142.2" cy="184.3" r="1.6" fill="#7a5f56"/><circle cx="116.3" cy="187.5" r="0.9" fill="#4f6662"/><circle cx="100.8" cy="142.9" r="1.3" fill="#4f6662"/><circle cx="143.7" cy="177.3" r="1.7" fill="#4f6662"/><circle cx="136.1" cy="95.2" r="1.4" fill="#7a5f56"/><circle cx="132.6" cy="183.6" r="1.0" fill="#4f6662"/><circle cx="143.9" cy="123.8" r="1.8" fill="#5a6f6a"/><circle cx="110.0" cy="89.9" r="1.7" fill="#7a5f56"/><circle cx="101.2" cy="142.4" r="1.6" fill="#8a6f64"/><circle cx="100.5" cy="166.2" r="0.9" fill="#4f6662"/><circle cx="105.8" cy="163.0" r="1.5" fill="#5a6f6a"/><circle cx="114.1" cy="146.3" r="1.3" fill="#8a6f64"/><circle cx="118.1" cy="125.8" r="1.3" fill="#7a5f56"/><circle cx="107.1" cy="110.3" r="1.7" fill="#5a6f6a"/><circle cx="146.2" cy="133.7" r="1.6" fill="#5a6f6a"/><circle cx="106.5" cy="170.9" r="1.7" fill="#8a6f64"/><circle cx="144.8" cy="176.6" r="1.6" fill="#5a6f6a"/><circle cx="149.7" cy="180.4" r="1.6" fill="#4f6662"/><circle cx="131.9" cy="132.1" r="1.1" fill="#7a5f56"/><circle cx="110.6" cy="97.8" r="0.9" fill="#7a5f56"/><circle cx="110.0" cy="91.8" r="1.4" fill="#4f6662"/><circle cx="105.8" cy="174.8" r="1.2" fill="#7a5f56"/><circle cx="111.3" cy="88.6" r="1.1" fill="#7a5f56"/><circle cx="107.1" cy="136.1" r="1.3" fill="#7a5f56"/><circle cx="124.1" cy="101.6" r="1.4" fill="#8a6f64"/><circle cx="140.5" cy="180.4" r="1.6" fill="#4f6662"/><circle cx="104.4" cy="163.0" r="1.2" fill="#7a5f56"/><circle cx="112.1" cy="110.3" r="0.9" fill="#5a6f6a"/><circle cx="113.6" cy="177.4" r="1.6" fill="#8a6f64"/><circle cx="150.8" cy="100.7" r="1.2" fill="#8a6f64"/><circle cx="125.4" cy="138.1" r="0.8" fill="#4f6662"/><circle cx="142.9" cy="139.7" r="1.2" fill="#5a6f6a"/><circle cx="100.2" cy="127.7" r="1.4" fill="#7a5f56"/><circle cx="105.5" cy="104.4" r="1.5" fill="#5a6f6a"/><circle cx="108.6" cy="94.1" r="1.7" fill="#8a6f64"/><circle cx="137.5" cy="163.7" r="1.0" fill="#5a6f6a"/><circle cx="131.1" cy="158.2" r="1.4" fill="#5a6f6a"/><circle cx="108.9" cy="92.7" r="1.6" fill="#4f6662"/><circle cx="147.5" cy="138.9" r="1.1" fill="#7a5f56"/><circle cx="143.5" cy="174.2" r="0.9" fill="#4f6662"/><circle cx="120.1" cy="163.8" r="1.7" fill="#5a6f6a"/><circle cx="112.4" cy="105.0" r="0.8" fill="#7a5f56"/><circle cx="135.9" cy="144.6" r="1.2" fill="#8a6f64"/><circle cx="148.3" cy="184.8" r="0.9" fill="#8a6f64"/><circle cx="136.6" cy="169.3" r="1.6" fill="#7a5f56"/><circle cx="144.9" cy="144.8" r="1.1" fill="#8a6f64"/><circle cx="103.8" cy="160.6" r="1.3" fill="#4f6662"/><circle cx="126.6" cy="140.8" r="1.0" fill="#8a6f64"/><circle cx="102.8" cy="149.1" r="0.9" fill="#5a6f6a"/><circle cx="111.5" cy="169.3" r="0.8" fill="#8a6f64"/><circle cx="148.0" cy="161.4" r="0.8" fill="#7a5f56"/><circle cx="130.4" cy="144.8" r="1.5" fill="#5a6f6a"/></g>
 <path d="M143,60 L145,82" stroke="#2a211e" stroke-width="1.2"/>
 <!-- hair -->
 <path d="M104,44 C98,55 96,75 95,100 C95,105 97,108 99,106 C104,92 110,70 118,58 C119,52 118,46 116,44 Z" fill="#4a2c22"/>
 <!-- hat -->
 <ellipse cx="128" cy="41" rx="29.5" ry="10.5" fill="#dde3d3" transform="rotate(12 128 41)"/>
 <ellipse cx="128" cy="40" rx="27" ry="8.5" fill="#e8ede0" transform="rotate(12 128 40)"/>
 <path d="M112,49 C111,38 111,27 115,19 C120,16 125,19 129,18 C134,16 140,17 143,21 C146,30 146,40 145,51 C134,55 121,54 112,49 Z" fill="#29302c"/>
 <path d="M114,19 C120,15 126,18 129,17 C134,15 140,16 143,20 L142,23 C138,20 133,20 129,21 C125,22 120,20 115,22 Z" fill="#d9dfd0"/>
 <path d="M112,42 C122,46 134,46 145,43 L145,48 C134,51 122,51 112,47 Z" fill="#1f2627"/>
 <!-- face shadow under brim -->
 <path d="M119,52 C126,56 138,56 146,53 L147,60 C138,62 126,62 119,59 Z" fill="#b08c78"/>
 <!-- leg gap -->
 <path d="M131,188 L130,211" stroke="#b8937d" stroke-width="1.5"/>
</g>
<rect x="0.75" y="0.75" width="209.5" height="209.5" rx="8" fill="none" stroke="#c3ccd5" stroke-width="1.5"/>
</svg>
<svg class="abs" style="left:290px;top:290px" width="225" height="225" viewBox="290 290 225 225">
 <rect x="296.5" y="298.2" width="209.2" height="209" rx="8" fill="none" stroke="#2a5ddf" stroke-width="3" stroke-dasharray="6.6 3.4"/>
 <path d="M400.6,347.4 V397.8 M375.3,372.5 H426.3" stroke="#2a5ddf" stroke-width="4.2" stroke-linecap="round"/>
</svg>

<!-- inputs -->
<div class="inp" style="left:69.0px;top:654.2px;width:642px;height:67.6px;"></div>
<div class="inp" style="left:724.4px;top:654.2px;width:376.6px;height:67.6px;"></div>
<div class="inp" style="left:1115.6px;top:654.2px;width:250.3px;height:67.6px;"></div>
<svg class="abs" style="left:1100px;top:730px" width="150" height="70" viewBox="1100 730 150 70">
 <rect x="1115.8" y="737.9" width="20" height="19.7" rx="4" fill="#2b5de0"/>
 <path d="M1120.2,748 L1124.3,752 L1131.5,743.6" fill="none" stroke="#fff" stroke-width="2.6" stroke-linecap="round" stroke-linejoin="round"/>
 <circle cx="1225.2" cy="778.2" r="9" fill="none" stroke="#2a5ddf" stroke-width="1.9"/>
 <text x="1225.2" y="783.8" text-anchor="middle" font-family="Liberation Sans" font-size="14.5" fill="#2a5ddf" stroke="#2a5ddf" stroke-width="0.3">?</text>
</svg>

<!-- editor -->
<div class="abs" style="left:69.0px;top:844.3px;width:1297.6px;height:400px;box-sizing:border-box;border:2px solid #7f8fa2;border-radius:10px;background:#fff;"></div>
<div class="abs" style="left:73.8px;top:847.5px;width:1288px;height:56.2px;background:#fff;box-shadow:0 1.5px 2px rgba(0,0,0,0.16), 1px 0 1.5px rgba(0,0,0,0.06), -1px 0 1.5px rgba(0,0,0,0.06);"></div>
<svg class="abs" style="left:0;top:0" width="1400" height="920" viewBox="0 0 1400 920">
<g fill="#333333" stroke="none">
 <!-- pilcrow -->
 <path d="M99.5,868.2 H105.6 V885 H103.4 V870.2 H102.3 V885 H100 V878.5 C96,878.5 93.2,876.5 93.2,873.4 C93.2,870.2 96,868.2 99.5,868.2 Z"/>
</g>
<text x="145.4" y="883.4" font-family="Liberation Sans" font-weight="bold" font-size="21.5" fill="#333333" textLength="10.7" lengthAdjust="spacingAndGlyphs">B</text>
<text x="197" y="883.5" font-family="Liberation Mono" font-weight="bold" font-style="italic" font-size="22" fill="#333333" textLength="11.5" lengthAdjust="spacingAndGlyphs">I</text>
<text x="246.5" y="882.5" font-family="Liberation Sans" font-weight="bold" font-size="19.5" fill="#333333">U</text>
<rect x="246.2" y="883.3" width="13.4" height="1.8" fill="#333333"/>
<text x="295.5" y="883.5" font-family="Liberation Sans" font-weight="bold" font-size="21" fill="#333333">S</text>
<rect x="294.8" y="874.8" width="17.3" height="1.6" fill="#333333"/>
<!-- image icon -->
<rect x="367.3" y="869.2" width="21.5" height="14.6" fill="none" stroke="#333333" stroke-width="2"/>
<path d="M370,881.5 L370,879 L374,873 L378,879 L381,876 L383,879 L386,880 L386,881.5 Z" fill="#333333"/>
<!-- video icon -->
<rect x="418.1" y="869.2" width="21.7" height="14.6" fill="none" stroke="#333333" stroke-width="2"/>
<path d="M425.7,872 L432,876.6 L425.7,881.3 Z" fill="#333333"/>
<!-- link icon -->
<path d="M477.3,871.3 A5.7,5.7 0 1 0 477.3,881.7 M482.5,871.3 A5.7,5.7 0 1 1 482.5,881.7" fill="none" stroke="#333333" stroke-width="2.5" stroke-linecap="round"/>
<rect x="476.2" y="875.3" width="7.4" height="2.6" fill="#333333"/>
<!-- table icon -->
<rect x="519.9" y="869.2" width="21.7" height="14.8" fill="none" stroke="#333333" stroke-width="2"/>
<path d="M519.9,874.2 H541.6 M519.9,879.1 H541.6 M526.2,869.2 V884 M535.2,869.2 V884" stroke="#333333" stroke-width="1.5"/>
<!-- A underline -->
<text x="598.5" y="883" font-family="Liberation Sans" font-weight="bold" font-size="19.5" fill="#333333" textLength="13.4" lengthAdjust="spacingAndGlyphs">A</text>
<rect x="598.5" y="883.6" width="13.4" height="2.9" fill="#333333"/>
<!-- highlight A -->
<rect x="646" y="866.5" width="20.4" height="19.8" fill="#333333"/>
<text x="650.3" y="883.3" font-family="Liberation Sans" font-weight="bold" font-size="18" fill="#ffffff" textLength="12" lengthAdjust="spacingAndGlyphs">A</text>
<!-- a with arrow -->
<text x="696.5" y="882" font-family="Liberation Sans" font-weight="bold" font-size="15" fill="#333333">a</text>
<path d="M713,866.7 L717,871.5 L709,871.5 Z M713,886.1 L717,881.3 L709,881.3 Z" fill="#333333"/>
<rect x="712.2" y="871" width="1.6" height="11" fill="#333333"/>
<!-- Aa -->
<text x="747.8" y="883" font-family="Liberation Sans" font-weight="bold" font-size="17.5" fill="#333333" textLength="20.6" lengthAdjust="spacingAndGlyphs">Aa</text>
<!-- align left -->
<g fill="#333333">
 <rect x="820.8" y="869.8" width="23.4" height="3.3"/><rect x="820.8" y="875.1" width="16.7" height="3.1"/><rect x="820.8" y="880" width="10" height="3.3"/>
 <!-- hr -->
 <rect x="871.8" y="874.8" width="23.1" height="3.4"/>
 <!-- bullet list -->
 <rect x="922.3" y="869.8" width="3.6" height="3.3"/><rect x="922.3" y="875.1" width="3.6" height="3.1"/><rect x="922.3" y="880" width="3.6" height="3.3"/>
 <rect x="929.3" y="869.8" width="16.5" height="3.3"/><rect x="929.3" y="875.1" width="16.5" height="3.1"/><rect x="929.3" y="880" width="16.5" height="3.3"/>
 <!-- numbered list -->
 <rect x="980.3" y="869.8" width="16.6" height="3.3"/><rect x="980.3" y="875.1" width="16.6" height="3.1"/><rect x="980.3" y="880" width="16.6" height="3.3"/>
 <!-- outdent -->
 <rect x="1024.3" y="869.8" width="23.6" height="3.3"/><rect x="1033.2" y="875.1" width="14.7" height="3.1"/><rect x="1033.2" y="880" width="14.7" height="3.3"/>
 <path d="M1024.3,878.5 L1030.6,874.6 L1030.6,882.6 Z"/>
 <!-- indent -->
 <rect x="1074.9" y="869.8" width="24" height="3.3"/><rect x="1083.4" y="875.1" width="15.5" height="3.1"/><rect x="1083.4" y="880" width="15.5" height="3.3"/>
 <path d="M1081.4,878.5 L1074.9,874.6 L1074.9,882.6 Z"/>
</g>
<text x="972.6" y="874.9" font-family="Liberation Sans" font-size="7.4" font-weight="bold" fill="#333333">1</text>
<text x="972.6" y="883.3" font-family="Liberation Sans" font-size="7.4" font-weight="bold" fill="#333333">2</text>
<!-- code -->
<path d="M1281.5,870.9 L1274.6,876.4 L1281.5,881.9 M1288.8,870.9 L1295.7,876.4 L1288.8,881.9" fill="none" stroke="#333333" stroke-width="2.2" stroke-linecap="round" stroke-linejoin="miter"/>
<!-- expand -->
<path d="M1336.5,866.5 H1346 V876 L1342.8,872.6 L1339.1,876.4 L1337.2,874.5 L1340.9,870.7 Z" fill="#333333"/>
<path d="M1325.8,886.5 V877 L1329.2,880.4 L1332.9,876.7 L1334.8,878.6 L1331.1,882.3 L1335.3,886.5 Z" fill="#333333"/>
</svg>

<!-- price input -->
<div class="inp" style="left:1474.7px;top:357.6px;width:396.6px;height:88.1px;"></div>
<div class="abs" style="left:1549.7px;top:373.2px;width:1.9px;height:57.5px;background:#7f8fa2;"></div>
<svg class="abs" style="left:1890px;top:490px" width="50" height="480" viewBox="1890 490 50 480">
 <path d="M1902.3,499.8 L1914.3,511.8 L1926.3,499.8" fill="none" stroke="#5d6e80" stroke-width="2.6" stroke-linecap="round" stroke-linejoin="round"/>
 <path d="M1902.3,948 L1914.3,960 L1926.3,948" fill="none" stroke="#5d6e80" stroke-width="2.6" stroke-linecap="round" stroke-linejoin="round"/>
</svg>
<div class="abs" style="left:1475px;top:680px;width:27px;height:20px;border-radius:10px;background:#7f90a2;"></div>
<div class="abs" style="left:1478.6px;top:683.2px;width:13.8px;height:13.8px;border-radius:50%;background:#fff;"></div>

<div class="t" style="left:66.67px;top:26.50px;color:#2a5ddf;font-family:'Liberation Sans';font-size:23.5px;line-height:1;white-space:nowrap;letter-spacing:-0.523px;transform:scaleX(0.86);transform-origin:0 0;-webkit-text-stroke:1.76px currentColor;">BACK</div>
<div class="t" style="left:29.60px;top:89.40px;color:#0c1c30;font-family:'Liberation Sans';font-size:57.0px;line-height:1;white-space:nowrap;letter-spacing:-0.956px;transform:scaleX(0.95);transform-origin:0 0;-webkit-text-stroke:2.85px currentColor;">Black Dress</div>
<div class="t" style="left:28.36px;top:196.50px;color:#2a5ddf;font-family:'Liberation Sans';font-size:28.5px;line-height:1;white-space:nowrap;letter-spacing:-0.970px;-webkit-text-stroke:1.43px currentColor;">General</div>
<div class="t" style="left:150.98px;top:196.50px;color:#0c1c30;font-family:'Liberation Sans';font-size:28.5px;line-height:1;white-space:nowrap;letter-spacing:0.014px;-webkit-text-stroke:1.43px currentColor;">Attributes</div>
<div class="t" style="left:299.04px;top:196.50px;color:#0c1c30;font-family:'Liberation Sans';font-size:28.5px;line-height:1;white-space:nowrap;letter-spacing:-0.204px;-webkit-text-stroke:1.43px currentColor;">Options</div>
<div class="t" style="left:422.95px;top:196.50px;color:#0c1c30;font-family:'Liberation Sans';font-size:28.5px;line-height:1;white-space:nowrap;letter-spacing:-1.057px;-webkit-text-stroke:1.43px currentColor;">Files</div>
<div class="t" style="left:505.67px;top:196.50px;color:#0c1c30;font-family:'Liberation Sans';font-size:28.5px;line-height:1;white-space:nowrap;letter-spacing:-0.777px;-webkit-text-stroke:1.43px currentColor;">Shipping & Pickup</div>
<div class="t" style="left:751.74px;top:196.50px;color:#0c1c30;font-family:'Liberation Sans';font-size:28.5px;line-height:1;white-space:nowrap;letter-spacing:-1.241px;transform:scaleX(0.9);transform-origin:0 0;-webkit-text-stroke:1.71px currentColor;">SEO</div>
<div class="t" style="left:830.85px;top:196.50px;color:#0c1c30;font-family:'Liberation Sans';font-size:28.5px;line-height:1;white-space:nowrap;letter-spacing:-0.870px;-webkit-text-stroke:1.43px currentColor;">Related Products</div>
<div class="t" style="left:1064.53px;top:196.50px;color:#0c1c30;font-family:'Liberation Sans';font-size:28.5px;line-height:1;white-space:nowrap;letter-spacing:-0.197px;-webkit-text-stroke:1.43px currentColor;">“Buy Now” Button</div>
<div class="t" style="left:1478.10px;top:26.50px;color:#2a5ddf;font-family:'Liberation Sans';font-size:24.5px;line-height:1;white-space:nowrap;letter-spacing:-0.339px;-webkit-text-stroke:0.73px currentColor;">View My Cool Store</div>
<div class="t" style="left:1768.50px;top:28.00px;color:#ffffff;font-family:'Liberation Sans';font-size:22.0px;line-height:1;white-space:nowrap;letter-spacing:-1.046px;transform:scaleX(0.9);transform-origin:0 0;-webkit-text-stroke:1.10px currentColor;">SR</div>
<div class="t" style="left:1876.09px;top:26.50px;color:#2a5ddf;font-family:'Liberation Sans';font-size:24.5px;line-height:1;white-space:nowrap;letter-spacing:-0.364px;-webkit-text-stroke:0.73px currentColor;">Get Help</div>
<div class="t" style="left:1451.63px;top:108.40px;color:#ffffff;font-family:'Liberation Sans';font-size:21.7px;line-height:1;white-space:nowrap;letter-spacing:-0.729px;-webkit-text-stroke:1.04px currentColor;">Add New Product</div>
<div class="t" style="left:1651.10px;top:108.60px;color:#0c1c30;font-family:'Liberation Sans';font-size:21.7px;line-height:1;white-space:nowrap;letter-spacing:-0.538px;-webkit-text-stroke:0.98px currentColor;">Duplicate Product</div>
<div class="t" style="left:334.76px;top:463.60px;color:#2a5ddf;font-family:'Liberation Sans';font-size:21.3px;line-height:1;white-space:nowrap;letter-spacing:-0.370px;transform:scaleX(0.95);transform-origin:0 0;-webkit-text-stroke:0.26px currentColor;">Upload Images</div>
<div class="t" style="left:69.32px;top:611.60px;color:#0c1c30;font-family:'Liberation Sans';font-size:24.5px;line-height:1;white-space:nowrap;letter-spacing:-0.888px;-webkit-text-stroke:1.08px currentColor;">Name</div>
<div class="t" style="left:724.37px;top:611.60px;color:#0c1c30;font-family:'Liberation Sans';font-size:24.5px;line-height:1;white-space:nowrap;letter-spacing:-1.403px;-webkit-text-stroke:1.08px currentColor;">SKU</div>
<div class="t" style="left:1116.63px;top:611.60px;color:#0c1c30;font-family:'Liberation Sans';font-size:24.5px;line-height:1;white-space:nowrap;letter-spacing:-0.452px;-webkit-text-stroke:1.08px currentColor;">Weight, lbs</div>
<div class="t" style="left:86.08px;top:676.30px;color:#0c1c30;font-family:'Liberation Sans';font-size:25.5px;line-height:1;white-space:nowrap;letter-spacing:-0.417px;transform:scaleX(0.92);transform-origin:0 0;-webkit-text-stroke:0.31px currentColor;">Black Dress</div>
<div class="t" style="left:741.70px;top:676.30px;color:#0c1c30;font-family:'Liberation Sans';font-size:25.5px;line-height:1;white-space:nowrap;letter-spacing:-0.744px;-webkit-text-stroke:0.31px currentColor;">A0001</div>
<div class="t" style="left:1332.99px;top:676.60px;color:#0c1c30;font-family:'Liberation Sans';font-size:25.5px;line-height:1;white-space:nowrap;letter-spacing:0.000px;transform:scaleX(0.85);transform-origin:0 0;-webkit-text-stroke:0.31px currentColor;">1</div>
<div class="t" style="left:1147.06px;top:737.80px;color:#66788b;font-family:'Liberation Sans';font-size:20.0px;line-height:1;white-space:nowrap;letter-spacing:-0.099px;-webkit-text-stroke:0.24px currentColor;">Requires shipping or</div>
<div class="t" style="left:1147.29px;top:767.20px;color:#66788b;font-family:'Liberation Sans';font-size:20.0px;line-height:1;white-space:nowrap;letter-spacing:0.163px;-webkit-text-stroke:0.24px currentColor;">pickup</div>
<div class="t" style="left:69.52px;top:801.90px;color:#0c1c30;font-family:'Liberation Sans';font-size:24.5px;line-height:1;white-space:nowrap;letter-spacing:0.070px;-webkit-text-stroke:1.08px currentColor;">Description</div>
<div class="t" style="left:108.52px;top:943.60px;color:#10203a;font-family:'Liberation Sans';font-size:24.0px;line-height:1;white-space:nowrap;letter-spacing:-0.119px;">This season’s collection</div>
<div class="t" style="left:1475.04px;top:304.50px;color:#0c1c30;font-family:'Liberation Sans';font-size:34.4px;line-height:1;white-space:nowrap;letter-spacing:-0.075px;-webkit-text-stroke:1.51px currentColor;">Pricing</div>
<div class="t" style="left:1506.21px;top:384.00px;color:#6a7d92;font-family:'Liberation Sans';font-size:37.0px;line-height:1;white-space:nowrap;letter-spacing:0.000px;transform:scaleX(0.92);transform-origin:0 0;-webkit-text-stroke:0.44px currentColor;">$</div>
<div class="t" style="left:1574.92px;top:380.50px;color:#0c1c30;font-family:'Liberation Sans';font-size:43.0px;line-height:1;white-space:nowrap;letter-spacing:-0.704px;-webkit-text-stroke:1.89px currentColor;">25.00</div>
<div class="t" style="left:1475.03px;top:494.20px;color:#2a5ddf;font-family:'Liberation Sans';font-size:24.0px;line-height:1;white-space:nowrap;letter-spacing:-0.214px;-webkit-text-stroke:0.29px currentColor;">Manage pricing options</div>
<div class="t" style="left:1475.32px;top:626.60px;color:#0c1c30;font-family:'Liberation Sans';font-size:24.5px;line-height:1;white-space:nowrap;letter-spacing:-0.144px;-webkit-text-stroke:1.08px currentColor;">Product availability</div>
<div class="t" style="left:1510.04px;top:678.40px;color:#627487;font-family:'Liberation Sans';font-size:25.0px;line-height:1;white-space:nowrap;letter-spacing:-0.112px;transform:scaleX(0.95);transform-origin:0 0;-webkit-text-stroke:0.75px currentColor;">Disabled</div>
<div class="t" style="left:1474.87px;top:813.50px;color:#0c1c30;font-family:'Liberation Sans';font-size:24.5px;line-height:1;white-space:nowrap;letter-spacing:-0.227px;-webkit-text-stroke:1.08px currentColor;">Stock Control</div>
<div class="t" style="left:1474.83px;top:863.50px;color:#23a548;font-family:'Liberation Sans';font-size:25.0px;line-height:1;white-space:nowrap;letter-spacing:-0.342px;transform:scaleX(0.95);transform-origin:0 0;-webkit-text-stroke:0.75px currentColor;">In Stock</div>
<div class="t" style="left:1564.80px;top:863.50px;color:#0c1c30;font-family:'Liberation Sans';font-size:25.0px;line-height:1;white-space:nowrap;letter-spacing:0.303px;transform:scaleX(0.9);transform-origin:0 0;-webkit-text-stroke:0.75px currentColor;">(∞)</div>
<div class="t" style="left:1474.93px;top:941.90px;color:#2a5ddf;font-family:'Liberation Sans';font-size:24.0px;line-height:1;white-space:nowrap;letter-spacing:-0.181px;-webkit-text-stroke:0.29px currentColor;">Manage stock control</div>
<div class="t" style="left:1474.93px;top:1073.70px;color:#2a5ddf;font-family:'Liberation Sans';font-size:24.0px;line-height:1;white-space:nowrap;letter-spacing:-0.159px;-webkit-text-stroke:0.29px currentColor;">Preview product</div>
<div class="t" style="left:1474.82px;top:1125.20px;color:#2a5ddf;font-family:'Liberation Sans';font-size:24.0px;line-height:1;white-space:nowrap;letter-spacing:0.040px;-webkit-text-stroke:0.29px currentColor;">Open in storefront</div>
<div class="abs" style="left:0;top:1156px;width:1999px;height:20.3px;background:linear-gradient(rgba(0,0,0,0),rgba(0,0,0,0.025));"></div>
<div class="abs" style="left:0;top:1176.3px;width:1999px;height:1.7px;background:#000;"></div>
</body></html>
